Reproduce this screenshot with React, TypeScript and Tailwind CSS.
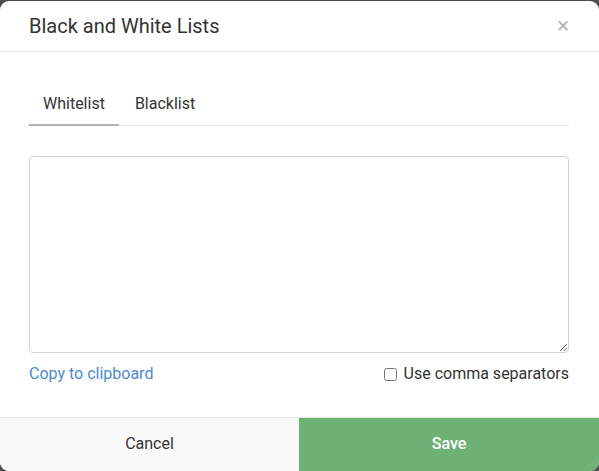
import { useState } from 'react'

export default function App() {
  const [tab, setTab] = useState<'white' | 'black'>('white')
  const [comma, setComma] = useState(false)

  return (
    <div className="h-[471px] w-[599px] overflow-hidden bg-[#4d4d4d] pt-px" style={{ fontFamily: 'Roboto, "Liberation Sans", sans-serif' }}>
      <div className="flex h-[470px] flex-col overflow-hidden rounded-[9px] bg-white">
        <div className="flex h-[51px] items-center justify-between border-b border-[#e5e5e5] pl-[29px] pr-[30px]">
          <h1 className="text-[20px] text-[#333]">Black and White Lists</h1>
          <button className="text-[22px] leading-none text-[#b5b5b5]">×</button>
        </div>

        <div className="flex-1 pl-[29px] pr-[30px] pt-[30px]">
          <div className="flex border-b border-[#e5e5e5]">
            <button
              onClick={() => setTab('white')}
              className={`-mb-px px-[14px] pb-[8px] pt-[10px] text-[16px] leading-6 text-[#333] ${tab === 'white' ? 'border-b-2 border-[#b3b3b3]' : 'border-b-2 border-transparent'}`}
            >
              Whitelist
            </button>
            <button
              onClick={() => setTab('black')}
              className={`-mb-px px-[16px] pb-[8px] pt-[10px] text-[16px] leading-6 text-[#333] ${tab === 'black' ? 'border-b-2 border-[#b3b3b3]' : 'border-b-2 border-transparent'}`}
            >
              Blacklist
            </button>
          </div>

          <textarea className="mt-[30px] block h-[197px] w-full rounded-[4px] border border-[#cfd4da] p-2 text-[14px] outline-none" />

          <div className="mt-[9px] flex items-center justify-between text-[16px] leading-6">
            <a href="#" className="text-[#4b8bd1]">Copy to clipboard</a>
            <label className="flex items-center gap-[7px] text-[#333]">
              <input
                type="checkbox"
                checked={comma}
                onChange={(e) => setComma(e.target.checked)}
                className="h-[13px] w-[13px]"
              />
              Use comma separators
            </label>
          </div>
        </div>

        <div className="flex h-[54px] border-t border-[#e5e5e5]">
          <button className="w-[299px] bg-[#f9f9f9] pb-[2px] text-[16px] text-[#333]">Cancel</button>
          <button className="flex-1 bg-[#6db274] pb-[2px] text-[16px] font-medium text-white">Save</button>
        </div>
      </div>
    </div>
  )
}
